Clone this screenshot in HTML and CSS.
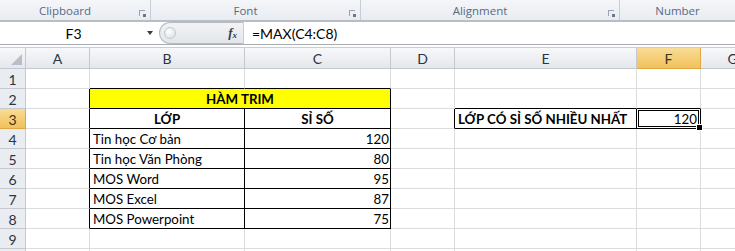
FILE: index.html
```html
<!DOCTYPE html>
<html lang="vi">
<head>
<meta charset="UTF-8">
<title>HÀM TRIM - Excel</title>
<link rel="stylesheet" href="styles.css">
</head>
<body>
<div class="ribbon">
  <div class="group g-clip">Clipboard<span class="launcher"></span></div>
  <div class="group g-font">Font<span class="launcher"></span></div>
  <div class="group g-align">Alignment<span class="launcher"></span></div>
  <div class="group g-num">Number</div>
</div>

<div class="formulaBar">
  <div class="nameBox">
    <span class="nameText">F3</span>
    <span class="dropArrow"></span>
  </div>
  <div class="pill">
    <span class="knob"></span>
    <span class="fx">f<sub>x</sub></span>
  </div>
  <div class="formula">=MAX(C4:C8)</div>
</div>
<div class="barGap"></div>

<div class="sheet">
  <!-- header row -->
  <div class="hd corner"><span class="tri"></span></div>
  <div class="hd">A</div>
  <div class="hd">B</div>
  <div class="hd">C</div>
  <div class="hd">D</div>
  <div class="hd">E</div>
  <div class="hd active">F</div>
  <div class="hd">G</div>

  <!-- row 1 -->
  <div class="rh">1</div>
  <div class="c"></div><div class="c bb"></div><div class="c bb"></div><div class="c"></div><div class="c"></div><div class="c"></div><div class="c"></div>

  <!-- row 2 -->
  <div class="rh">2</div>
  <div class="c br"></div>
  <div class="c bd title span2">HÀM TRIM</div>
  <div class="c"></div><div class="c bb"></div><div class="c bb"></div><div class="c"></div>

  <!-- row 3 -->
  <div class="rh active">3</div>
  <div class="c br"></div>
  <div class="c bd b center">LỚP</div>
  <div class="c bd b center">SỈ SỐ</div>
  <div class="c br"></div>
  <div class="c bd b">LỚP CÓ SỈ SỐ NHIỀU NHẤT</div>
  <div class="c bd num sel">120<span class="handle"></span></div>
  <div class="c"></div>

  <!-- rows 4-8 -->
  <div class="rh">4</div>
  <div class="c br"></div><div class="c bd">Tin học Cơ bản</div><div class="c bd num">120</div>
  <div class="c"></div><div class="c"></div><div class="c"></div><div class="c"></div>

  <div class="rh">5</div>
  <div class="c br"></div><div class="c bd">Tin học Văn Phòng</div><div class="c bd num">80</div>
  <div class="c"></div><div class="c"></div><div class="c"></div><div class="c"></div>

  <div class="rh">6</div>
  <div class="c br"></div><div class="c bd">MOS Word</div><div class="c bd num">95</div>
  <div class="c"></div><div class="c"></div><div class="c"></div><div class="c"></div>

  <div class="rh">7</div>
  <div class="c br"></div><div class="c bd">MOS Excel</div><div class="c bd num">87</div>
  <div class="c"></div><div class="c"></div><div class="c"></div><div class="c"></div>

  <div class="rh">8</div>
  <div class="c br"></div><div class="c bd">MOS Powerpoint</div><div class="c bd num">75</div>
  <div class="c"></div><div class="c"></div><div class="c"></div><div class="c"></div>

  <!-- row 9, and the top sliver of row 10 -->
  <div class="rh">9</div>
  <div class="c"></div><div class="c"></div><div class="c"></div><div class="c"></div><div class="c"></div><div class="c"></div><div class="c"></div>
  <div class="rh"></div>
  <div class="c"></div><div class="c"></div><div class="c"></div><div class="c"></div><div class="c"></div><div class="c"></div><div class="c"></div>
</div>
</body>
</html>
```

FILE: styles.css
```css
* { box-sizing: border-box; }
html, body { margin: 0; padding: 0; background: #fff; overflow: hidden; }
body { width: 735px; height: 251px; font-family: Lato, "Liberation Sans", sans-serif; color: #000; }

/* ribbon group captions */
.ribbon { display: flex; height: 22px; background: linear-gradient(#f4f6f9, #e8ecf1); border-bottom: 2px solid #b9bec6; }
.group { position: relative; display: flex; align-items: flex-end; justify-content: center; font-family: "Open Sans", "Liberation Sans", sans-serif; font-size: 11.5px; color: #5a6a83; border-right: 1px solid #c8ccd3; padding: 0 20px 2px 0; }
.g-clip { width: 151px; }
.g-font { width: 210px; }
.g-align { width: 259px; }
.g-num { flex: 1; border-right: none; padding-right: 0; }
.launcher { position: absolute; right: 5px; bottom: 4px; width: 6px; height: 6px; border-left: 1px solid #9aa3af; border-top: 1px solid #9aa3af; }
.launcher::after { content: ""; position: absolute; right: -1px; bottom: -1px; width: 3px; height: 3px; background: #6d7785; }

/* formula bar */
.formulaBar { display: flex; height: 23px; border-bottom: 1px solid #a9aeb5; }
.nameBox { width: 159px; display: flex; align-items: center; font-size: 14px; }
.nameText { flex: 1; text-align: center; }
.dropArrow { width: 0; height: 0; margin-right: 6px; border-left: 3.5px solid transparent; border-right: 3.5px solid transparent; border-top: 4px solid #3b3b3b; }
.pill { width: 85px; display: flex; align-items: center; justify-content: space-between; background: linear-gradient(#f3f4f6, #e2e5ea); border: 1px solid #b6bbc3; border-right-color: #c9cdd3; border-radius: 11px 0 0 11px; padding: 0 6px 0 4px; }
.knob { width: 12px; height: 12px; border-radius: 50%; background: radial-gradient(circle at 40% 35%, #fff, #d7dbe0); border: 1px solid #c3c8ce; }
.fx { font-family: "Liberation Serif", serif; font-style: italic; font-weight: bold; font-size: 13px; color: #3d3d3d; }
.fx sub { font-size: 9px; vertical-align: -1px; }
.formula { flex: 1; display: flex; align-items: center; padding-left: 8px; font-size: 14px; }
.barGap { height: 3px; border-bottom: 1px solid #c9cdd3; }

/* sheet grid */
.sheet { display: grid; grid-template-columns: 26px 64px 155px 146px 64px 182px 64px 64px; grid-template-rows: 21px; grid-auto-rows: 20px; font-size: 13.3px; }
.hd, .rh { display: flex; align-items: center; justify-content: center; background: linear-gradient(#f7f8fa, #e4e7ec); border-right: 1px solid #c5c9cf; border-bottom: 1px solid #c5c9cf; color: #2b3442; font-size: 14px; }
.rh { background: #e9ecf0; padding-top: 1px; }
.hd.active, .rh.active { background: linear-gradient(#f9dc95, #f1c15c); border-color: #e2a641; color: #3a3320; }
.corner { position: relative; }
.tri { position: absolute; right: 3px; bottom: 3px; width: 0; height: 0; border-left: 11px solid transparent; border-bottom: 11px solid #b9bec6; }

.c { position: relative; display: flex; align-items: flex-end; padding: 0 3px 1px; border-right: 1px solid #dadcdd; border-bottom: 1px solid #dadcdd; white-space: nowrap; }
.bb { border-bottom-color: #000; }
.br { border-right-color: #000; }
.bd { border-right-color: #000; border-bottom-color: #000; }
.span2 { grid-column: span 2; }
.title { background: #ffff00; justify-content: center; font-weight: bold; }
.b { font-weight: bold; }
.center { justify-content: center; }
.num { justify-content: flex-end; padding-right: 1px; }
.sel { box-shadow: inset 0 0 0 1px #fff, inset 0 0 0 2px #000; padding-right: 3px; }
.handle { position: absolute; right: -3px; bottom: -3px; width: 5px; height: 5px; background: #000; border: 1px solid #fff; box-sizing: content-box; z-index: 2; }
```
